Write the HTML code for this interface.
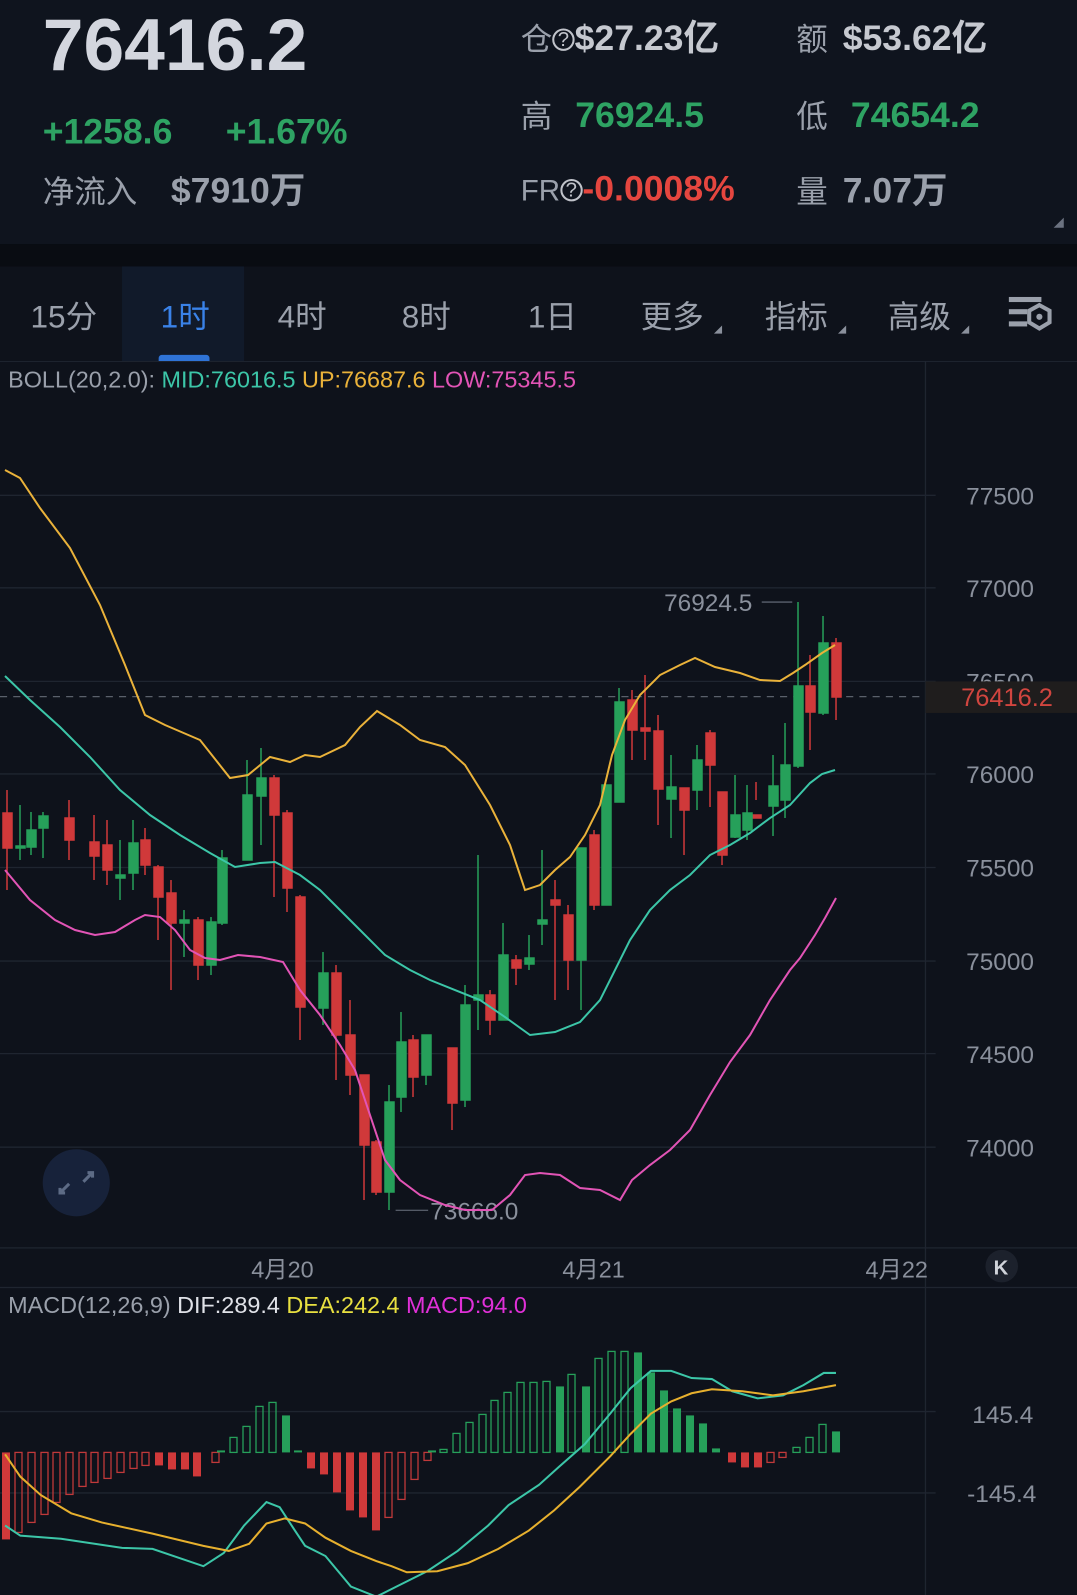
<!DOCTYPE html>
<html><head><meta charset="utf-8"><style>
*{margin:0;padding:0;box-sizing:border-box}
html,body{width:1077px;height:1595px;overflow:hidden;background:#0e121b}
#w{width:1059px;height:1569px;transform:scale(1.017);transform-origin:0 0;position:relative;font-family:"Liberation Sans","Noto Sans CJK SC",sans-serif;color:#8a909c}
.a{position:absolute;white-space:nowrap}
.g{color:#2ea363}.r{color:#e5463f}.w{color:#d3d6de}
</style></head><body><div id="w">
<div style="position:absolute;left:0;top:0;width:1077px;height:240px;background:#0f141e"></div>
<div style="position:absolute;left:0;top:240px;width:1077px;height:22px;background:#090c12"></div>
<div class="a w" style="left:42px;top:4px;font-size:72px;font-weight:bold">76416.2</div>
<div class="a g" style="left:42px;top:110px;font-size:35px;font-weight:bold">+1258.6</div>
<div class="a g" style="left:222px;top:110px;font-size:35px;font-weight:bold">+1.67%</div>
<div class="a" style="left:42px;top:163px;font-size:31px;color:#9aa0ab">净流入</div>
<div class="a" style="left:168px;top:159px;font-size:35px;font-weight:bold;color:#9aa0ab">$7910万</div>
<div class="a" style="left:512px;top:9px;font-size:31px;color:#9aa0ab">仓<span style="font-size:20px;display:inline-block;border:2px solid #c0c3ca;border-radius:50%;width:22px;height:22px;line-height:18px;text-align:center;color:#c0c3ca;vertical-align:4px">?</span><b style="font-size:35px;color:#c6c9d0">$27.23亿</b></div>
<div class="a" style="left:783px;top:9px;font-size:31px;color:#9aa0ab">额 <b style="font-size:35px;color:#c6c9d0;margin-left:6px">$53.62亿</b></div>
<div class="a" style="left:512px;top:89px;font-size:31px;color:#9aa0ab">高 <b class="g" style="font-size:35px;margin-left:14px">76924.5</b></div>
<div class="a" style="left:783px;top:89px;font-size:31px;color:#9aa0ab">低 <b class="g" style="font-size:35px;margin-left:14px">74654.2</b></div>
<div class="a" style="left:512px;top:166px;font-size:29px;color:#9aa0ab">FR<span style="font-size:20px;display:inline-block;border:2px solid #c0c3ca;border-radius:50%;width:22px;height:22px;line-height:18px;text-align:center;color:#c0c3ca;vertical-align:4px">?</span><b class="r" style="font-size:35px">-0.0008%</b></div>
<div class="a" style="left:783px;top:159px;font-size:31px;color:#9aa0ab">量 <b style="font-size:35px;color:#9aa0ab;margin-left:6px">7.07万</b></div>
<div class="a" style="left:1036px;top:214px;width:0;height:0;border-left:10px solid transparent;border-bottom:10px solid #6b7280"></div>
<div style="position:absolute;left:120px;top:262px;width:120px;height:93px;background:#111a2a"></div>
<div style="position:absolute;left:156px;top:349px;width:50px;height:6px;border-radius:3px 3px 0 0;background:#2f73d6"></div>
<div class="a" style="left:30px;top:286px;font-size:31px;color:#9aa0ab">15分</div>
<div class="a" style="left:158px;top:286px;font-size:31px;color:#3a82e8">1时</div>
<div class="a" style="left:273px;top:286px;font-size:31px;color:#9aa0ab">4时</div>
<div class="a" style="left:395px;top:286px;font-size:31px;color:#9aa0ab">8时</div>
<div class="a" style="left:519px;top:286px;font-size:31px;color:#9aa0ab">1日</div>
<div class="a" style="left:630px;top:286px;font-size:31px;color:#9aa0ab">更多</div>
<div class="a" style="left:752px;top:286px;font-size:31px;color:#9aa0ab">指标</div>
<div class="a" style="left:873px;top:286px;font-size:31px;color:#9aa0ab">高级</div>
<div class="a" style="left:702px;top:320px;border-left:8px solid transparent;border-bottom:8px solid #8a909c"></div>
<div class="a" style="left:824px;top:320px;border-left:8px solid transparent;border-bottom:8px solid #8a909c"></div>
<div class="a" style="left:945px;top:320px;border-left:8px solid transparent;border-bottom:8px solid #8a909c"></div>
<svg class="a" style="left:990px;top:290px" width="46" height="40" viewBox="0 0 46 40"><rect x="2" y="2" width="32" height="5" fill="#9aa0ab"/><rect x="2" y="14" width="18" height="5" fill="#9aa0ab"/><rect x="2" y="26" width="18" height="5" fill="#9aa0ab"/><polygon points="32,10 42,15.5 42,27 32,33 22,27 22,15.5" fill="none" stroke="#9aa0ab" stroke-width="4"/><circle cx="32" cy="21.5" r="3" fill="#9aa0ab"/></svg>
<div style="position:absolute;left:0;top:355px;width:1077px;height:1px;background:#1e2430"></div>
<div class="a" style="left:8px;top:360px;font-size:23px"><span style="color:#9aa0ab">BOLL(20,2.0): </span><span style="color:#3cc6a8">MID:76016.5 </span><span style="color:#eab23a">UP:76687.6 </span><span style="color:#e254b6">LOW:75345.5</span></div>
<svg class="a" style="left:0;top:0" width="1077" height="1595">
<g stroke="#1f2530" stroke-width="1.3">
<line x1="0" y1="487" x2="920" y2="487"/><line x1="0" y1="578" x2="920" y2="578"/><line x1="0" y1="670" x2="920" y2="670"/><line x1="0" y1="761" x2="920" y2="761"/><line x1="0" y1="853" x2="920" y2="853"/><line x1="0" y1="945" x2="920" y2="945"/><line x1="0" y1="1036" x2="920" y2="1036"/><line x1="0" y1="1128" x2="920" y2="1128"/>
<line x1="0" y1="1388" x2="920" y2="1388"/><line x1="0" y1="1468" x2="920" y2="1468"/>
<line x1="910" y1="355" x2="910" y2="1595"/>
<line x1="0" y1="1227" x2="1077" y2="1227"/><line x1="0" y1="1266" x2="1077" y2="1266"/>
</g>
<g fill="#8a909c" font-size="24" font-family="Liberation Sans, sans-serif">
<text x="950" y="496">77500</text><text x="950" y="587">77000</text><text x="950" y="679">76500</text><text x="950" y="770">76000</text><text x="950" y="862">75500</text><text x="950" y="954">75000</text><text x="950" y="1045">74500</text><text x="950" y="1137">74000</text>
<text x="956" y="1399">145.4</text><text x="951" y="1477">-145.4</text>
<text x="653" y="601">76924.5</text><text x="423" y="1199">73666.0</text>
</g>
<g font-size="23" fill="#8a909c" font-family="Liberation Sans, Noto Sans CJK SC, sans-serif"><text x="247" y="1256">4月20</text><text x="553" y="1256">4月21</text><text x="851" y="1256">4月22</text></g>
<line x1="749" y1="592" x2="779" y2="592" stroke="#6b7280"/><line x1="389" y1="1190" x2="421" y2="1190" stroke="#6b7280"/>
<rect x="910" y="670" width="167" height="31" fill="#1f1d1d"/>
<text x="945" y="694" font-size="25" fill="#d0453f" font-family="Liberation Sans, sans-serif">76416.2</text>
<line x1="0" y1="685" x2="910" y2="685" stroke="#5a606b" stroke-dasharray="7,6" stroke-width="1.3"/>
<circle cx="985" cy="1245" r="16" fill="#1c212c"/><text x="977" y="1253" font-size="20" fill="#d0d3da" font-weight="bold">K</text>
<circle cx="75" cy="1163" r="33" fill="#17223a"/>
<path d="M64 1173 l-5 0 0 -5 M59 1173 l9 -9 M86 1153 l5 0 0 5 M91 1153 l-9 9" stroke="#5d6b85" stroke-width="3" fill="none"/>
<g transform="scale(0.9833)">
<g stroke-width="1.5">
<g stroke="#d0393a" fill="#d0393a">
<line x1="7" y1="790" x2="7" y2="890"/><rect x="3" y="813" width="9" height="35"/>
<line x1="69" y1="800" x2="69" y2="860"/><rect x="65" y="818" width="9" height="22"/>
<line x1="94" y1="815" x2="94" y2="880"/><rect x="90" y="842" width="9" height="14"/>
<line x1="107" y1="820" x2="107" y2="885"/><rect x="103" y="845" width="9" height="25"/>
<line x1="145" y1="828" x2="145" y2="875"/><rect x="141" y="840" width="9" height="25"/>
<line x1="158" y1="865" x2="158" y2="940"/><rect x="154" y="867" width="9" height="30"/>
<line x1="171" y1="880" x2="171" y2="990"/><rect x="167" y="893" width="9" height="30"/>
<line x1="198" y1="917" x2="198" y2="980"/><rect x="194" y="920" width="9" height="45"/>
<line x1="274" y1="775" x2="274" y2="897"/><rect x="270" y="778" width="9" height="37"/>
<line x1="287" y1="810" x2="287" y2="912"/><rect x="283" y="813" width="9" height="75"/>
<line x1="300" y1="895" x2="300" y2="1040"/><rect x="296" y="897" width="9" height="110"/>
<line x1="336" y1="965" x2="336" y2="1080"/><rect x="332" y="973" width="9" height="62"/>
<line x1="350" y1="1000" x2="350" y2="1095"/><rect x="346" y="1035" width="9" height="40"/>
<line x1="364" y1="1075" x2="364" y2="1200"/><rect x="360" y="1075" width="9" height="70"/>
<line x1="376" y1="1140" x2="376" y2="1195"/><rect x="372" y="1142" width="9" height="50"/>
<line x1="413" y1="1035" x2="413" y2="1097"/><rect x="409" y="1040" width="9" height="37"/>
<line x1="452" y1="1048" x2="452" y2="1130"/><rect x="448" y="1048" width="9" height="55"/>
<line x1="490" y1="990" x2="490" y2="1035"/><rect x="486" y="995" width="9" height="25"/>
<line x1="516" y1="955" x2="516" y2="985"/><rect x="512" y="960" width="9" height="8"/>
<line x1="555" y1="880" x2="555" y2="1000"/><rect x="551" y="900" width="9" height="5"/>
<line x1="568" y1="905" x2="568" y2="990"/><rect x="564" y="915" width="9" height="45"/>
<line x1="594" y1="830" x2="594" y2="910"/><rect x="590" y="835" width="9" height="70"/>
<line x1="632" y1="690" x2="632" y2="760"/><rect x="628" y="700" width="9" height="30"/>
<line x1="645" y1="675" x2="645" y2="760"/><rect x="641" y="728" width="9" height="3"/>
<line x1="658" y1="715" x2="658" y2="825"/><rect x="654" y="731" width="9" height="58"/>
<line x1="684" y1="795" x2="684" y2="855"/><rect x="680" y="788" width="9" height="22"/>
<line x1="710" y1="730" x2="710" y2="807"/><rect x="706" y="733" width="9" height="32"/>
<line x1="722" y1="792" x2="722" y2="865"/><rect x="718" y="792" width="9" height="63"/>
<line x1="756" y1="782" x2="756" y2="800"/><rect x="752" y="815" width="9" height="3"/>
<line x1="810" y1="655" x2="810" y2="750"/><rect x="806" y="686" width="9" height="26"/>
<line x1="836" y1="638" x2="836" y2="720"/><rect x="832" y="643" width="9" height="54"/>
</g>
<g stroke="#26a05a" fill="#26a05a">
<line x1="20" y1="805" x2="20" y2="860"/><rect x="16" y="846" width="9" height="2"/>
<line x1="31" y1="812" x2="31" y2="855"/><rect x="27" y="830" width="9" height="17"/>
<line x1="43" y1="812" x2="43" y2="858"/><rect x="39" y="816" width="9" height="12"/>
<line x1="120" y1="840" x2="120" y2="900"/><rect x="116" y="875" width="9" height="3"/>
<line x1="133" y1="820" x2="133" y2="890"/><rect x="129" y="843" width="9" height="30"/>
<line x1="184" y1="910" x2="184" y2="957"/><rect x="180" y="920" width="9" height="3"/>
<line x1="211" y1="917" x2="211" y2="975"/><rect x="207" y="922" width="9" height="43"/>
<line x1="222" y1="850" x2="222" y2="925"/><rect x="218" y="858" width="9" height="65"/>
<line x1="247" y1="760" x2="247" y2="860"/><rect x="243" y="795" width="9" height="65"/>
<line x1="261" y1="748" x2="261" y2="845"/><rect x="257" y="778" width="9" height="18"/>
<line x1="323" y1="952" x2="323" y2="1025"/><rect x="319" y="973" width="9" height="35"/>
<line x1="389" y1="1085" x2="389" y2="1210"/><rect x="385" y="1102" width="9" height="90"/>
<line x1="401" y1="1012" x2="401" y2="1112"/><rect x="397" y="1042" width="9" height="55"/>
<line x1="426" y1="1035" x2="426" y2="1085"/><rect x="422" y="1035" width="9" height="40"/>
<line x1="465" y1="985" x2="465" y2="1107"/><rect x="461" y="1005" width="9" height="95"/>
<line x1="478" y1="855" x2="478" y2="1030"/><rect x="474" y="995" width="9" height="5"/>
<line x1="503" y1="923" x2="503" y2="1017"/><rect x="499" y="955" width="9" height="65"/>
<line x1="529" y1="935" x2="529" y2="970"/><rect x="525" y="958" width="9" height="6"/>
<line x1="542" y1="850" x2="542" y2="945"/><rect x="538" y="920" width="9" height="4"/>
<line x1="581" y1="860" x2="581" y2="1010"/><rect x="577" y="848" width="9" height="112"/>
<line x1="606" y1="800" x2="606" y2="905"/><rect x="602" y="785" width="9" height="120"/>
<line x1="619" y1="688" x2="619" y2="800"/><rect x="615" y="702" width="9" height="100"/>
<line x1="671" y1="755" x2="671" y2="838"/><rect x="667" y="787" width="9" height="12"/>
<line x1="697" y1="745" x2="697" y2="810"/><rect x="693" y="760" width="9" height="30"/>
<line x1="735" y1="775" x2="735" y2="838"/><rect x="731" y="815" width="9" height="22"/>
<line x1="747" y1="785" x2="747" y2="840"/><rect x="743" y="813" width="9" height="17"/>
<line x1="773" y1="755" x2="773" y2="836"/><rect x="769" y="786" width="9" height="20"/>
<line x1="785" y1="723" x2="785" y2="818"/><rect x="781" y="765" width="9" height="35"/>
<line x1="798" y1="602" x2="798" y2="768"/><rect x="794" y="686" width="9" height="80"/>
<line x1="823" y1="616" x2="823" y2="715"/><rect x="819" y="643" width="9" height="70"/>
</g>
</g>
<polyline fill="none" stroke="#eab23a" stroke-width="2" points="5,470 20,478 40,508 70,548 100,605 125,665 145,715 165,725 200,740 230,778 248,775 270,757 290,762 305,755 320,757 345,745 360,727 377,711 400,725 420,740 445,747 465,765 490,805 510,845 525,890 540,885 555,870 570,857 585,835 600,805 612,755 625,720 640,695 660,675 680,665 695,658 715,667 740,673 760,680 780,681 793,673 805,665 822,653 835,645"/>
<polyline fill="none" stroke="#3cc6a8" stroke-width="2" points="5,676 30,700 60,727 90,757 120,790 150,815 180,835 210,853 235,867 260,863 275,862 300,875 320,890 340,910 360,930 385,955 410,970 430,980 455,990 480,1000 505,1017 530,1035 555,1032 580,1022 600,1000 615,970 630,940 650,910 670,890 690,875 710,855 730,845 750,833 770,818 790,805 810,783 822,774 835,770"/>
<polyline fill="none" stroke="#e254b6" stroke-width="2" points="5,870 30,900 55,920 75,930 95,935 115,932 135,920 145,915 160,917 175,930 190,950 205,958 220,960 238,955 260,957 283,962 300,990 320,1015 340,1045 355,1070 370,1115 385,1160 400,1180 420,1195 445,1205 465,1210 492,1210 510,1195 525,1175 540,1173 560,1175 580,1188 600,1190 620,1200 632,1180 650,1165 670,1150 690,1130 710,1095 730,1062 750,1035 770,1000 790,970 800,958 815,935 825,918 836,898"/>
<g stroke-width="1.3" transform="translate(0,24.4)">
<rect x="2" y="1428" width="8" height="87" fill="#d0393a"/>
<g fill="none" stroke="#c0393a">
<rect x="15" y="1428" width="7" height="80"/><rect x="28" y="1428" width="7" height="70"/><rect x="41" y="1428" width="7" height="62"/><rect x="53" y="1428" width="7" height="50"/><rect x="66" y="1428" width="7" height="42"/><rect x="79" y="1428" width="7" height="34"/><rect x="91" y="1428" width="7" height="30"/><rect x="104" y="1428" width="7" height="26"/><rect x="117" y="1428" width="7" height="20"/><rect x="130" y="1428" width="7" height="16"/><rect x="142" y="1428" width="7" height="13"/><rect x="212" y="1428" width="7" height="10"/>
<rect x="385" y="1428" width="7" height="65"/><rect x="398" y="1428" width="7" height="47"/><rect x="411" y="1428" width="7" height="27"/><rect x="424" y="1428" width="7" height="8"/>
<rect x="767" y="1428" width="7" height="10"/><rect x="779" y="1428" width="7" height="5"/>
</g>
<g fill="#d0393a"><rect x="155" y="1428" width="8" height="13"/><rect x="168" y="1428" width="8" height="17"/><rect x="181" y="1428" width="8" height="17"/><rect x="193" y="1428" width="8" height="24"/><rect x="307" y="1428" width="8" height="16"/><rect x="320" y="1428" width="8" height="22"/><rect x="333" y="1428" width="8" height="40"/><rect x="346" y="1428" width="8" height="58"/><rect x="359" y="1428" width="8" height="65"/><rect x="372" y="1428" width="8" height="78"/><rect x="728" y="1428" width="8" height="10"/><rect x="741" y="1428" width="8" height="15"/><rect x="754" y="1428" width="8" height="15"/></g>
<g fill="none" stroke="#26a05a">
<rect x="230" y="1413" width="7" height="15"/><rect x="243" y="1402" width="7" height="26"/><rect x="256" y="1382" width="7" height="46"/><rect x="269" y="1378" width="7" height="50"/>
<rect x="440" y="1425" width="7" height="3"/><rect x="453" y="1409" width="7" height="19"/><rect x="466" y="1398" width="7" height="30"/><rect x="479" y="1390" width="7" height="38"/><rect x="491" y="1376" width="7" height="52"/><rect x="504" y="1368" width="7" height="60"/><rect x="517" y="1358" width="7" height="70"/><rect x="530" y="1358" width="7" height="70"/><rect x="543" y="1357" width="7" height="71"/><rect x="568" y="1350" width="7" height="78"/><rect x="595" y="1334" width="7" height="94"/><rect x="608" y="1327" width="7" height="101"/><rect x="621" y="1327" width="7" height="101"/>
<rect x="793" y="1423" width="7" height="5"/><rect x="806" y="1413" width="7" height="15"/><rect x="819" y="1400" width="7" height="28"/>
</g>
<g fill="#26a05a"><rect x="217" y="1426" width="8" height="2"/><rect x="282" y="1391" width="8" height="37"/><rect x="294" y="1426" width="8" height="2"/><rect x="428" y="1426" width="8" height="2"/><rect x="556" y="1362" width="8" height="66"/><rect x="582" y="1362" width="8" height="66"/><rect x="634" y="1328" width="8" height="100"/><rect x="647" y="1348" width="8" height="80"/><rect x="660" y="1366" width="8" height="62"/><rect x="673" y="1384" width="8" height="44"/><rect x="686" y="1391" width="8" height="37"/><rect x="699" y="1399" width="8" height="29"/><rect x="712" y="1424" width="8" height="4"/><rect x="832" y="1407" width="8" height="21"/></g>
</g>
</g>
<polyline fill="none" stroke="#3cc6a8" stroke-width="2" points="5,1500 20,1510 60,1513 120,1522 150,1523 200,1540 220,1527 240,1500 262,1477 275,1482 290,1505 300,1520 320,1530 345,1560 370,1570 390,1560 420,1545 450,1525 480,1500 500,1480 530,1460 550,1442 575,1420 600,1390 620,1365 640,1348 660,1348 680,1355 700,1356 720,1368 745,1375 770,1372 790,1362 810,1350 822,1350"/>
<polyline fill="none" stroke="#e7b02e" stroke-width="2" points="5,1430 20,1452 40,1470 70,1488 100,1497 150,1508 200,1520 225,1525 245,1518 262,1498 280,1493 300,1498 320,1512 345,1525 370,1535 385,1540 400,1546 430,1545 460,1537 490,1523 520,1505 545,1485 570,1462 600,1432 620,1410 640,1390 660,1378 680,1370 700,1366 730,1368 760,1372 790,1368 822,1362"/>
</svg>
<div class="a" style="left:8px;top:1270px;font-size:23px"><span style="color:#9aa0ab">MACD(12,26,9) </span><span style="color:#e0e2e8">DIF:289.4 </span><span style="color:#e8e040">DEA:242.4 </span><span style="color:#e030d8">MACD:94.0</span></div>
</div></body></html>
